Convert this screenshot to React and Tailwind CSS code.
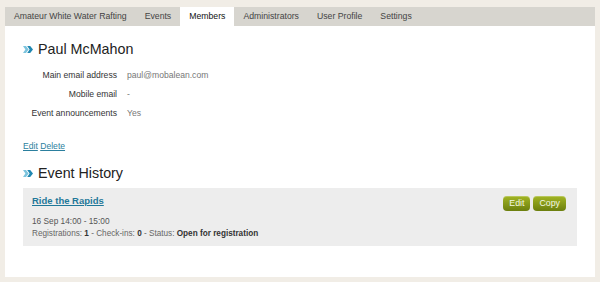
import React from "react";

const tabs = [
  "Amateur White Water Rafting",
  "Events",
  "Members",
  "Administrators",
  "User Profile",
  "Settings",
];

const details = [
  { label: "Main email address", value: "paul@mobalean.com" },
  { label: "Mobile email", value: "-" },
  { label: "Event announcements", value: "Yes" },
];

function Chevrons() {
  return (
    <svg width="10" height="7" viewBox="0 0 10 7" className="shrink-0">
      <polygon points="0,0 3,0 5.6,3.5 3,7 0,7 2.4,3.5" fill="#7cc4de" />
      <polygon points="4.2,0 7.2,0 10,3.5 7.2,7 4.2,7 6.6,3.5" fill="#2188b2" />
    </svg>
  );
}

function Heading({ children, className = "" }) {
  return (
    <div className={"flex items-center gap-[5px] " + className}>
      <Chevrons />
      <h2 className="text-[14.3px] leading-[18px] text-[#222]">{children}</h2>
    </div>
  );
}

function GreenButton({ children }) {
  return (
    <button className="h-[15px] px-[6px] rounded-[4px] bg-gradient-to-b from-[#a3b624] to-[#6c7f0e] text-[8.8px] leading-[15px] text-[#f4f7e4] shadow-[inset_0_1px_0_rgba(255,255,255,0.25)]">
      {children}
    </button>
  );
}

export default function App() {
  return (
    <div
      className="w-[600px] h-[282px] bg-[#f1ede6] px-[5px] pt-[7px] pb-[5px] flex flex-col"
      style={{ fontFamily: '"Liberation Sans", Arial, sans-serif' }}
    >
      <nav className="h-[19px] bg-[#d7d5cf] flex shrink-0">
        {tabs.map((t) => (
          <div
            key={t}
            className={
              "px-[9px] flex items-center text-[8.7px] " +
              (t === "Members" ? "bg-white text-[#111]" : "text-[#444]")
            }
          >
            {t}
          </div>
        ))}
      </nav>

      <main className="flex-1 bg-white px-[18px] pt-[14px]">
        <Heading>Paul McMahon</Heading>

        <div className="mt-[8px]">
          {details.map((d) => (
            <div key={d.label} className="h-[19px] flex items-center text-[8.6px]">
              <span className="w-[94px] text-right text-[#333]">{d.label}</span>
              <span className="ml-[10px] text-[#777]">{d.value}</span>
            </div>
          ))}
        </div>

        <div className="mt-[17px] text-[8.6px] leading-[12px] text-[#2b7f9e]">
          <a href="#" className="underline">Edit</a>{" "}
          <a href="#" className="underline">Delete</a>
        </div>

        <Heading className="mt-[12px]">Event History</Heading>

        <div className="mt-[6px] h-[58px] bg-[#ededed] pl-[9px] pr-[11px] pt-[7px] flex justify-between">
          <div className="flex flex-col">
            <a href="#" className="text-[9.5px] leading-[12px] font-bold text-[#1f7899] underline">
              Ride the Rapids
            </a>
            <div className="mt-[8px] text-[8.3px] leading-[12px] text-[#555]">
              16 Sep 14:00 - 15:00
            </div>
            <div className="mt-[1px] text-[8.2px] leading-[12px] text-[#666]">
              Registrations: <b className="text-[#333]">1</b> - Check-ins:{" "}
              <b className="text-[#333]">0</b> - Status:{" "}
              <b className="text-[#333]">Open for registration</b>
            </div>
          </div>
          <div className="flex gap-[3px] pt-[1px] items-start">
            <GreenButton>Edit</GreenButton>
            <GreenButton>Copy</GreenButton>
          </div>
        </div>
      </main>
    </div>
  );
}
